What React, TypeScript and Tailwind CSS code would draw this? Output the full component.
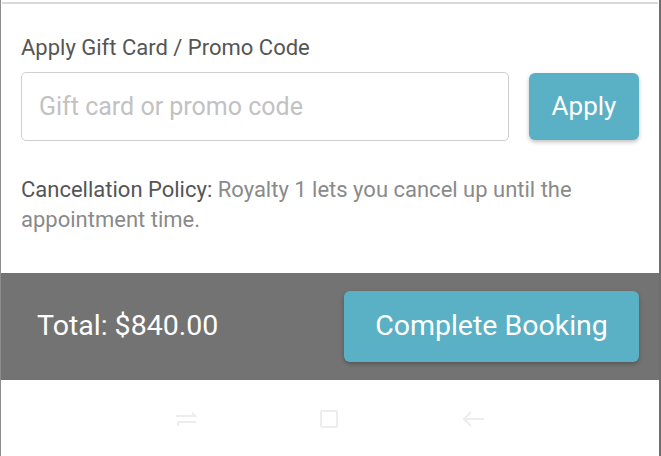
import React from "react";

function NavIcons() {
  return (
    <div className="flex h-full items-center justify-center gap-[122px] pt-[2px]">
      <svg width="22" height="20" viewBox="0 0 22 20" fill="none" stroke="#ededed" strokeWidth="2">
        <path d="M1 7h19l-3-3" />
        <path d="M21 13H3" />
        <path d="M3 13v4" />
      </svg>
      <svg width="20" height="22" viewBox="0 0 20 22" fill="none" stroke="#ededed" strokeWidth="2">
        <rect x="2" y="3" width="16" height="16" rx="1" />
      </svg>
      <svg width="24" height="20" viewBox="0 0 24 20" fill="none" stroke="#ededed" strokeWidth="2">
        <path d="M23 10H3" />
        <path d="M10 3l-7 7 7 7" />
      </svg>
    </div>
  );
}

export default function App() {
  return (
    <div
      className="flex h-[456px] w-[661px] flex-col overflow-hidden border-l border-r-2 border-l-[#8d8d8d] border-r-[#6f6f6f] bg-white"
      style={{ fontFamily: "Roboto, 'Noto Sans', sans-serif" }}
    >
      <div className="flex h-[273px] flex-col">
        <div className="mx-[1px] mt-[2px] h-[2px] border-t border-b border-[#d9d9d9]" />
        <div className="px-[20px] pt-[31px]">
          <p className="text-[22px] leading-[26px] text-[#555555]">Apply Gift Card / Promo Code</p>
          <div className="mt-[11px] flex items-center gap-[20px]">
            <input
              className="h-[69px] flex-1 rounded-[5px] border border-[#cfcfcf] px-[17px] text-[25px] text-[#444] outline-none placeholder:text-[#c2c2c2]"
              placeholder="Gift card or promo code"
            />
            <button className="h-[67px] w-[110px] rounded-[6px] bg-[#5ab0c4] text-[26px] text-white shadow-[0_2px_4px_rgba(0,0,0,0.25)]">
              Apply
            </button>
          </div>
          <p className="mt-[34px] text-[22px] leading-[30px] text-[#8a8a8a]">
            <span className="text-[#555555]">Cancellation Policy:</span> Royalty 1 lets you cancel up until the
            appointment time.
          </p>
        </div>
      </div>
      <div className="flex h-[107px] items-center justify-between bg-[#737373] pl-[36px] pr-[20px]">
        <span className="text-[28.5px] text-white">Total: $840.00</span>
        <button className="h-[71px] w-[295px] rounded-[6px] bg-[#5ab0c4] text-[28.5px] text-white shadow-[0_2px_4px_rgba(0,0,0,0.25)]">
          Complete Booking
        </button>
      </div>
      <div className="flex-1">
        <NavIcons />
      </div>
    </div>
  );
}
